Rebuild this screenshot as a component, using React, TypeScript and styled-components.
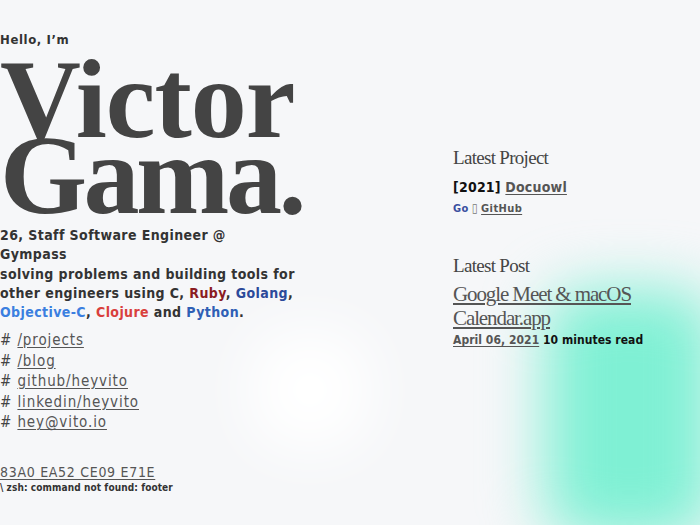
import React from "react";
import styled, { createGlobalStyle } from "styled-components";

const Global = createGlobalStyle`
  html, body { margin: 0; padding: 0; background: #f6f7f9; }
  body { overflow: hidden; }
`;

const mono = `"DejaVu Sans Condensed", "Liberation Sans Narrow", sans-serif`;
const serif = `"Liberation Serif", "DejaVu Serif", serif`;

const Page = styled.div`
  position: relative;
  width: 700px;
  height: 525px;
  overflow: hidden;
  display: flex;
  background: #f6f7f9;
  color: #333;
  font-family: ${mono};
`;

const Blob = styled.div<{ $x: number; $y: number; $w: number; $h: number; $c: string; $blur: number }>`
  position: absolute;
  left: ${(p) => p.$x}px;
  top: ${(p) => p.$y}px;
  width: ${(p) => p.$w}px;
  height: ${(p) => p.$h}px;
  background: ${(p) => p.$c};
  border-radius: 40px;
  filter: blur(${(p) => p.$blur}px);
  pointer-events: none;
`;

const Left = styled.div`
  position: relative;
  width: 453px;
  flex: none;
  padding-top: 32px;
  display: flex;
  flex-direction: column;
`;

const Hello = styled.div`
  font-size: 13px;
  font-weight: bold;
  letter-spacing: 0.6px;
  line-height: 16px;
`;

const Name = styled.h1`
  margin: 0;
  font-family: ${serif};
  font-weight: bold;
  font-size: 112px;
  line-height: 76px;
  color: #444;
  padding-top: 13px;
`;

const NameLine = styled.span<{ $tracking: number }>`
  display: block;
  letter-spacing: ${(p) => p.$tracking}px;
`;

const Bio = styled.div`
  margin-top: 13px;
  font-size: 14px;
  font-weight: bold;
  line-height: 19.3px;
  letter-spacing: 0.4px;
`;

const Line = styled.div`
  white-space: nowrap;
`;

const Lang = styled.span<{ $c: string }>`
  color: ${(p) => p.$c};
`;

const Links = styled.ul`
  list-style: none;
  margin: 8px 0 0;
  padding: 0;
  font-size: 15px;
  line-height: 20.5px;
  letter-spacing: 0.9px;
`;

const LinkItem = styled.li`
  color: #444;
`;

const A = styled.a`
  color: #555;
  text-decoration: underline;
  text-underline-offset: 2px;
`;

const Footer = styled.div`
  margin-top: 30px;
  display: flex;
  flex-direction: column;
`;

const Fingerprint = styled.a`
  color: #555;
  font-size: 14px;
  line-height: 18px;
  letter-spacing: 0.7px;
  text-decoration: underline;
  text-underline-offset: 2px;
`;

const Zsh = styled.div`
  font-size: 10px;
  font-weight: bold;
  letter-spacing: 0.1px;
  line-height: 14px;
  color: #333;
`;

const Right = styled.div`
  position: relative;
  padding-top: 146px;
  display: flex;
  flex-direction: column;
`;

const Section = styled.section<{ $gap: number }>`
  margin-bottom: ${(p) => p.$gap}px;
`;

const SectionTitle = styled.h2`
  margin: 0;
  font-family: ${serif};
  font-weight: normal;
  font-size: 19px;
  line-height: 24px;
  color: #444;
  letter-spacing: -0.7px;
`;

const ProjectLine = styled.div`
  margin-top: 8px;
  font-size: 14px;
  font-weight: bold;
  line-height: 18px;
  letter-spacing: 0.2px;
  color: #111;
`;

const Meta = styled.div`
  margin-top: 5px;
  font-size: 11px;
  font-weight: bold;
  line-height: 14px;
  letter-spacing: 0.4px;
`;

const Blue = styled.span`
  color: #3a4fa0;
`;

const Sep = styled.span`
  color: #777;
  font-size: 12px;
  font-weight: normal;
  margin: 0 3px;
`;

const PostTitle = styled.a`
  display: block;
  margin-top: 4px;
  font-family: ${serif};
  font-size: 21px;
  line-height: 24px;
  letter-spacing: -1.1px;
  color: #555;
  text-decoration: underline;
  text-underline-offset: 2px;
`;

const PostMeta = styled.div`
  margin-top: 2px;
  font-size: 12px;
  font-weight: bold;
  line-height: 16px;
  letter-spacing: 0.05px;
  color: #111;
`;

export default function App() {
  return (
    <>
      <Global />
      <Page>
        <Blob $x={545} $y={290} $w={170} $h={250} $c="#7ff0d4" $blur={30} />
        <Blob $x={250} $y={330} $w={120} $h={120} $c="#ffffff" $blur={30} />
        <Left>
          <Hello>Hello, I’m</Hello>
          <Name>
            <NameLine $tracking={-1}>Victor</NameLine>
            <NameLine $tracking={-3.5}>Gama.</NameLine>
          </Name>
          <Bio>
            <Line>26, Staff Software Engineer @</Line>
            <Line>Gympass</Line>
            <Line>solving problems and building tools for</Line>
            <Line>
              other engineers using C, <Lang $c="#8a1c22">Ruby</Lang>, <Lang $c="#2c4a9a">Golang</Lang>,
            </Line>
            <Line>
              <Lang $c="#3b7fe0">Objective-C</Lang>, <Lang $c="#d9403c">Clojure</Lang> and{" "}
              <Lang $c="#2f5fb5">Python</Lang>.
            </Line>
          </Bio>
          <Links>
            <LinkItem># <A href="#">/projects</A></LinkItem>
            <LinkItem># <A href="#">/blog</A></LinkItem>
            <LinkItem># <A href="#">github/heyvito</A></LinkItem>
            <LinkItem># <A href="#">linkedin/heyvito</A></LinkItem>
            <LinkItem># <A href="#">hey@vito.io</A></LinkItem>
          </Links>
          <Footer>
            <Fingerprint href="#">83A0 EA52 CE09 E71E</Fingerprint>
            <Zsh>\ zsh: command not found: footer</Zsh>
          </Footer>
        </Left>
        <Right>
          <Section $gap={38}>
            <SectionTitle>Latest Project</SectionTitle>
            <ProjectLine>
              [2021] <A href="#">Docuowl</A>
            </ProjectLine>
            <Meta>
              <Blue>Go</Blue>
              <Sep>▯</Sep>
              <A href="#">GitHub</A>
            </Meta>
          </Section>
          <Section $gap={0}>
            <SectionTitle>Latest Post</SectionTitle>
            <PostTitle href="#">
              Google Meet &amp; macOS
              <br />
              Calendar.app
            </PostTitle>
            <PostMeta>
              <A href="#">April 06, 2021</A> 10 minutes read
            </PostMeta>
          </Section>
        </Right>
      </Page>
    </>
  );
}
